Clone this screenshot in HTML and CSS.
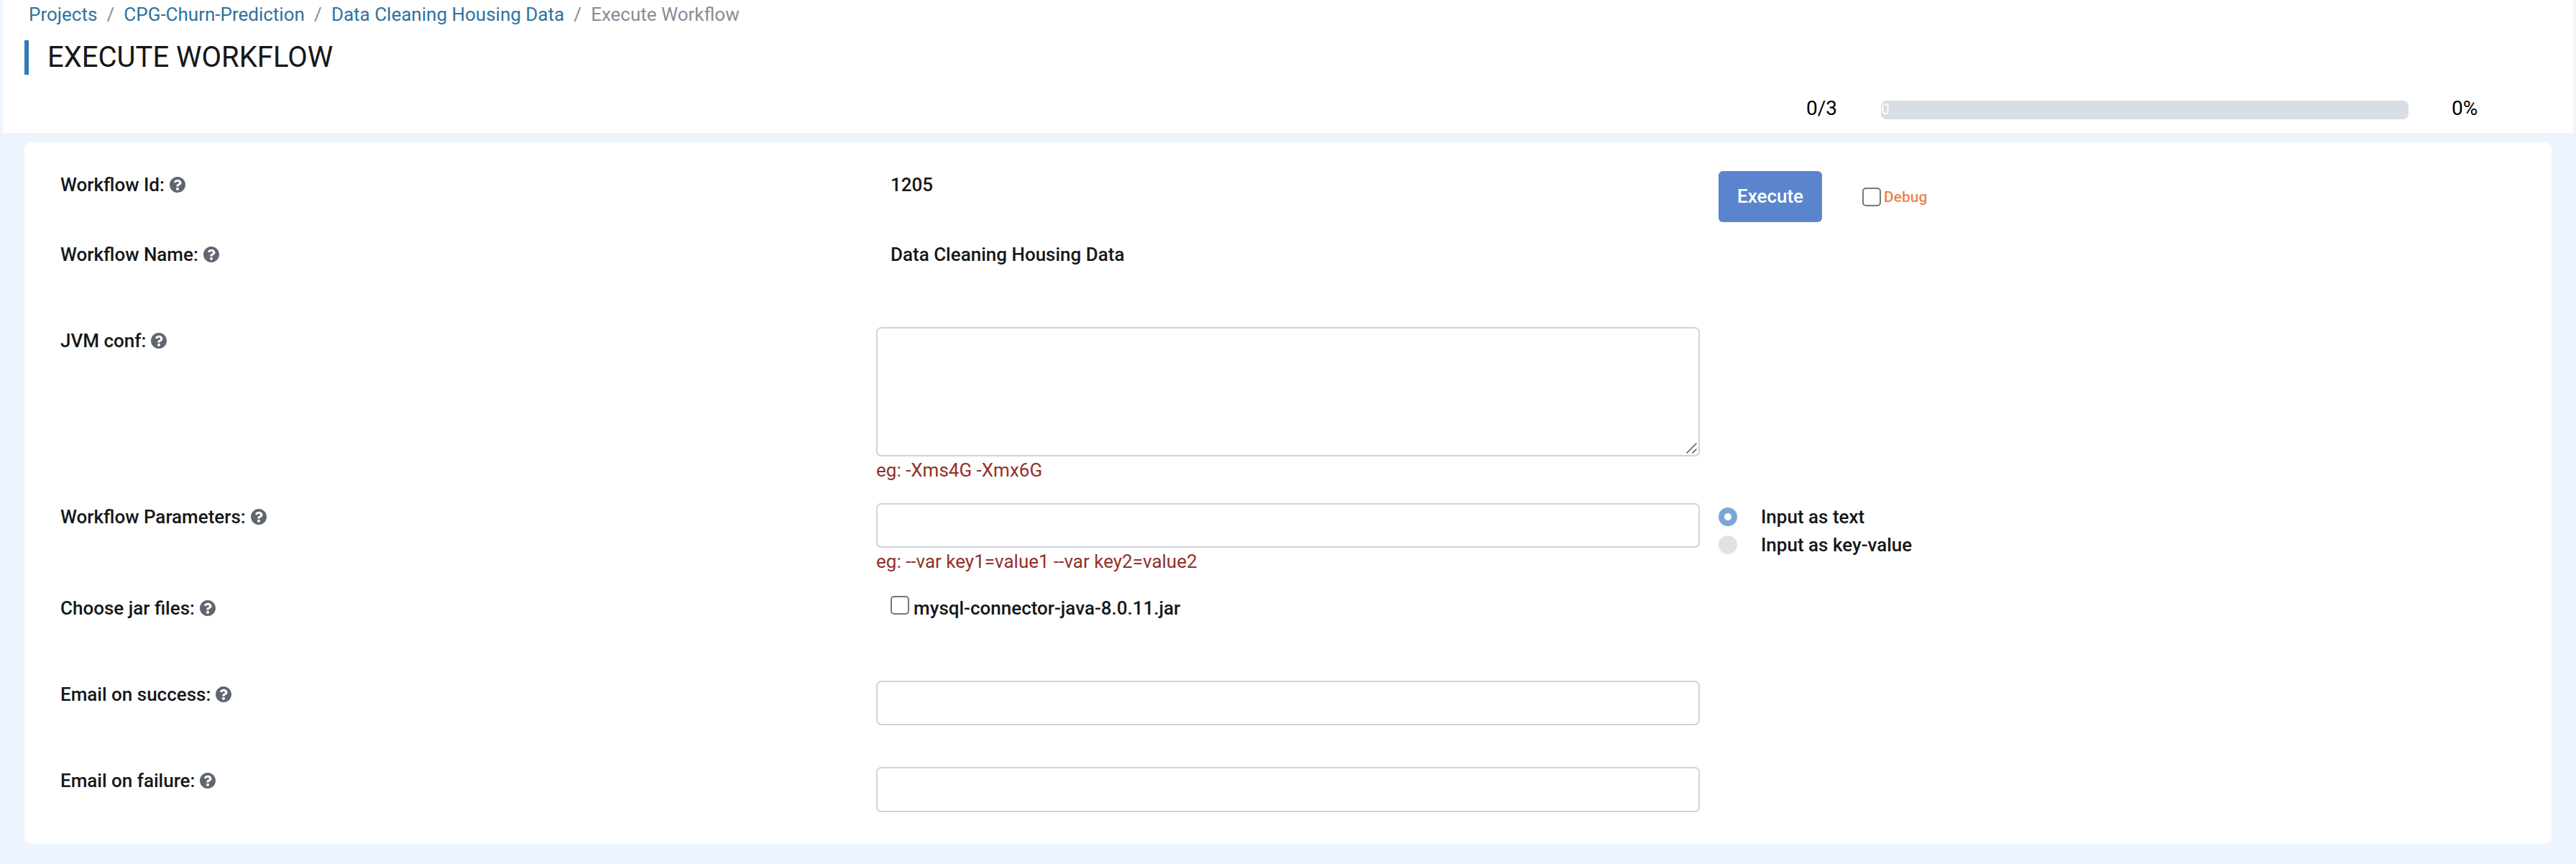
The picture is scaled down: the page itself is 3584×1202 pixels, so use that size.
FILE: index.html
```html
<!DOCTYPE html>
<html lang="en">
<head>
<meta charset="utf-8">
<title>Execute Workflow</title>
<link rel="stylesheet" href="styles.css">
</head>
<body>
<svg class="sprite" width="0" height="0" aria-hidden="true">
  <symbol id="help" viewBox="8 8 496 496">
    <path d="M504 256c0 136.997-111.043 248-248 248S8 392.997 8 256C8 119.083 119.043 8 256 8s248 111.083 248 248zM262.655 90c-54.497 0-89.255 22.957-116.549 63.758-3.536 5.286-2.353 12.415 2.715 16.258l34.699 26.31c5.205 3.947 12.621 3.008 16.665-2.122 17.864-22.658 30.113-35.797 57.303-35.797 20.429 0 45.698 13.148 45.698 32.958 0 14.976-12.363 22.667-32.534 33.976C247.128 238.528 216 254.941 216 296v4c0 6.627 5.373 12 12 12h56c6.627 0 12-5.373 12-12v-1.333c0-28.462 83.186-29.647 83.186-106.667 0-58.002-60.165-102-116.531-102zM256 338c-25.365 0-46 20.635-46 46 0 25.364 20.635 46 46 46s46-20.636 46-46c0-25.365-20.635-46-46-46z"/>
  </symbol>
</svg>
<header class="page-header">
  <nav class="breadcrumb">
    <a href="#">Projects</a><span class="sep">/</span><a href="#">CPG-Churn-Prediction</a><span class="sep">/</span><a href="#">Data Cleaning Housing Data</a><span class="sep">/</span><span class="current">Execute Workflow</span>
  </nav>
  <h1 class="title">EXECUTE WORKFLOW</h1>
  <div class="progress-row">
    <span class="count">0/3</span>
    <div class="track">0</div>
    <span class="percent">0%</span>
  </div>
</header>
<main class="card">
  <div class="row row-id">
    <div class="label">Workflow Id:<svg class="help"><use href="#help"/></svg></div>
    <div class="value">1205</div>
    <div class="actions">
      <button class="execute" type="button">Execute</button>
      <label class="debug"><input class="check" type="checkbox"><span class="debug-text">Debug</span></label>
    </div>
  </div>
  <div class="row row-name">
    <div class="label">Workflow Name:<svg class="help"><use href="#help"/></svg></div>
    <div class="value">Data Cleaning Housing Data</div>
  </div>
  <div class="row row-jvm">
    <div class="label">JVM conf:<svg class="help"><use href="#help"/></svg></div>
    <div class="field">
      <div class="control area"><svg class="grip" viewBox="0 0 15 15"><path d="M0.5 14.5L14.5 0.5M8.5 14.5L14.5 8.5"/></svg></div>
      <div class="hint">eg: -Xms4G -Xmx6G</div>
    </div>
  </div>
  <div class="row row-params">
    <div class="label">Workflow Parameters:<svg class="help"><use href="#help"/></svg></div>
    <div class="field">
      <input class="control" type="text">
      <div class="hint">eg: --var key1=value1 --var key2=value2</div>
    </div>
    <div class="radios">
      <label class="option"><input class="radio" type="radio" name="mode" checked>Input as text</label>
      <label class="option"><input class="radio" type="radio" name="mode">Input as key-value</label>
    </div>
  </div>
  <div class="row row-jar">
    <div class="label">Choose jar files:<svg class="help"><use href="#help"/></svg></div>
    <label class="value jar"><input class="check" type="checkbox">mysql-connector-java-8.0.11.jar</label>
  </div>
  <div class="row row-success">
    <div class="label">Email on success:<svg class="help"><use href="#help"/></svg></div>
    <div class="field"><input class="control" type="text"></div>
  </div>
  <div class="row row-failure">
    <div class="label">Email on failure:<svg class="help"><use href="#help"/></svg></div>
    <div class="field"><input class="control" type="text"></div>
  </div>
</main>
</body>
</html>
```
FILE: styles.css
```css
* { box-sizing: border-box; }
body {
  margin: 0;
  min-height: 1202px;
  background: #ecf4fe;
  color: #151719;
  font: 400 26px/39px Roboto, sans-serif;
}
.sprite { display: none; }
.page-header {
  height: 185px;
  margin: 0 4px 13px;
  background: #fff;
}
.breadcrumb { display: flex; height: 56px; padding: 1px 0 0 36px; }
.breadcrumb a { color: #2f729c; text-decoration: none; }
.sep { width: 37px; text-align: center; color: #868e96; }
.current { color: #868e96; }
.title {
  height: 48px;
  margin: 0 0 0 30px;
  padding-left: 26px;
  border-left: 6px solid #337ab7;
  font-size: 40px;
  font-weight: 400;
  line-height: 48px;
}
.progress-row {
  display: flex;
  align-items: center;
  height: 81px;
  padding: 17px 0 0 2509px;
  color: #000;
  font-size: 28px;
}
.count { width: 104px; margin-bottom: 5px; }
.track {
  width: 734px;
  height: 26px;
  border-radius: 8px;
  background: #d8dee5;
  color: #fff;
  font-size: 21px;
  line-height: 25px;
}
.percent { margin: 0 0 5px 60px; }
.card {
  width: 3516px;
  height: 976px;
  margin-left: 34px;
  padding: 40px 50px 0;
  border-radius: 10px;
  background: #fff;
}
.row {
  display: grid;
  grid-template-columns: 1135px 1146px 1fr;
  font-weight: 500;
}
.row-id { height: 97px; }
.row-name { height: 120px; }
.row-jvm { height: 245px; }
.row-params { height: 127px; }
.row-jar, .row-success { height: 120px; }
.label { display: flex; height: 39px; align-items: center; }
.help { width: 22px; height: 22px; margin: 0 0 2px 7px; fill: #5f666f; }
.value { height: 39px; padding-left: 20px; }
.control {
  display: block;
  width: 1146px;
  height: 62px;
  border: 2px solid #ced4da;
  border-radius: 7px;
  background: #fff;
}
.row-failure .control { height: 63px; }
.area {
  display: flex;
  height: 180px;
  padding: 2px;
  align-items: flex-end;
  justify-content: flex-end;
}
.grip { width: 15px; height: 15px; stroke: #555; stroke-width: 1.5; fill: none; }
.hint { color: #943029; font-weight: 400; }
.actions { display: flex; align-items: center; height: 71px; margin-left: 26px; }
.execute {
  width: 144px;
  height: 71px;
  padding: 0;
  border: 0;
  border-radius: 6px;
  background: #5a85cd;
  color: #fff;
  font: 500 26px/39px Roboto, sans-serif;
}
.debug { display: flex; align-items: center; margin-left: 56px; color: #e9854a; font-size: 21px; }
.debug-text { padding-top: 2px; }
.check {
  appearance: none;
  flex: none;
  width: 26px;
  height: 26px;
  margin: 0 4px 0 0;
  border: 2px solid #767676;
  border-radius: 5px;
  background: #fff;
}
.jar { display: flex; }
.jar .check { margin-top: 2px; margin-right: 6px; }
.radios { margin-left: 26px; }
.option { display: flex; height: 39px; }
.radio {
  appearance: none;
  width: 26px;
  height: 26px;
  margin: 6px 33px 0 0;
  border-radius: 50%;
  background: #dee2e6;
}
.radio:checked { border: 8px solid #7ca6d9; background: #fff; }
```
